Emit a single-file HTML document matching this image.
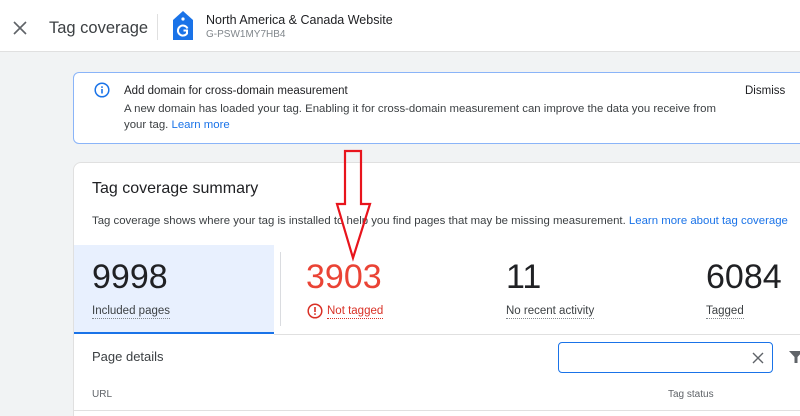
<!DOCTYPE html>
<html><head><meta charset="utf-8"><style>
*{margin:0;padding:0;box-sizing:border-box}
html,body{width:800px;height:416px;overflow:hidden}
body{background:#f1f3f4;font-family:"Liberation Sans",Arial,sans-serif;position:relative;color:#202124}
.a{position:absolute;white-space:nowrap}
</style></head><body>
<div class="a" style="left:0;top:0;width:800px;height:52px;background:#fff;border-bottom:1px solid #e0e0e0"></div>
<svg class="a" style="left:13px;top:21px" width="14" height="14" viewBox="0 0 14 14"><path d="M1 1L13 13M13 1L1 13" stroke="#5f6368" stroke-width="1.6"/></svg>
<div class="a" style="left:49px;top:19px;font-size:16.5px;color:#3c4043">Tag coverage</div>
<div class="a" style="left:157px;top:14px;width:1px;height:26px;background:#e0e0e0"></div>
<svg class="a" style="left:172px;top:11px" width="22" height="30" viewBox="0 0 22 30"><path d="M11 0L21 9V29H1V9Z" fill="#1a73e8"/><circle cx="11" cy="8" r="1.6" fill="#fff"/><path d="M15.5 17.5A5 5 0 1 0 15 22.5V19.5H11.5" fill="none" stroke="#fff" stroke-width="2"/></svg>
<div class="a" style="left:206px;top:13px;font-size:12.5px;color:#202124">North America &amp; Canada Website</div>
<div class="a" style="left:206px;top:29px;font-size:10px;color:#80868b">G-PSW1MY7HB4</div>

<div class="a" style="left:73px;top:72px;width:740px;height:72px;background:#fff;border:1px solid #8ab4f8;border-radius:6px"></div>
<svg class="a" style="left:94px;top:82px" width="16" height="16" viewBox="0 0 16 16"><circle cx="8" cy="8" r="6.8" fill="none" stroke="#1a73e8" stroke-width="1.5"/><rect x="7.2" y="7" width="1.6" height="4.5" fill="#1a73e8"/><rect x="7.2" y="4.3" width="1.6" height="1.6" fill="#1a73e8"/></svg>
<div class="a" style="left:124px;top:85px;font-size:11.5px;color:#202124">Add domain for cross-domain measurement</div>
<div class="a" style="left:124px;top:103px;font-size:11.4px;color:#3c4043">A new domain has loaded your tag. Enabling it for cross-domain measurement can improve the data you receive from</div>
<div class="a" style="left:124px;top:119px;font-size:11.4px;color:#3c4043">your tag. <span style="color:#1a73e8">Learn more</span></div>
<div class="a" style="left:745px;top:85px;font-size:11.5px;color:#202124">Dismiss</div>

<div class="a" style="left:73px;top:162px;width:740px;height:270px;background:#fff;border:1px solid #e0e0e0;border-radius:8px;overflow:hidden">
 <div class="a" style="left:0;top:82px;width:200px;height:89px;background:#e8f0fe;border-bottom:2px solid #1a73e8"></div>
</div>
<div class="a" style="left:92px;top:180px;font-size:16px;color:#202124">Tag coverage summary</div>
<div class="a" style="left:92px;top:215px;font-size:11.4px;color:#3c4043">Tag coverage shows where your tag is installed to help you find pages that may be missing measurement. <span style="color:#1a73e8">Learn more about tag coverage</span></div>
<div class="a" style="left:280px;top:252px;width:1px;height:74px;background:#dadce0"></div>
<div class="a" style="left:92px;top:258px;font-size:34px;color:#202124">9998</div>
<div class="a" style="left:92px;top:304px;font-size:11.5px;color:#3c4043;border-bottom:1px dotted #80868b;line-height:14px">Included pages</div>
<div class="a" style="left:306px;top:258px;font-size:34px;color:#ea4335">3903</div>
<svg class="a" style="left:307px;top:303px" width="16" height="16" viewBox="0 0 16 16"><circle cx="8" cy="8" r="6.8" fill="none" stroke="#d93025" stroke-width="1.5"/><rect x="7.2" y="4" width="1.6" height="5" fill="#d93025"/><rect x="7.2" y="10.3" width="1.6" height="1.6" fill="#d93025"/></svg>
<div class="a" style="left:327px;top:304px;font-size:11.5px;color:#d93025;border-bottom:1px dotted #d93025;line-height:14px">Not tagged</div>
<div class="a" style="left:506px;top:258px;font-size:34px;color:#202124">11</div>
<div class="a" style="left:506px;top:304px;font-size:11.5px;color:#3c4043;border-bottom:1px dotted #80868b;line-height:14px">No recent activity</div>
<div class="a" style="left:706px;top:258px;font-size:34px;color:#202124">6084</div>
<div class="a" style="left:706px;top:304px;font-size:11.5px;color:#3c4043;border-bottom:1px dotted #80868b;line-height:14px">Tagged</div>
<div class="a" style="left:274px;top:334px;width:540px;height:1px;background:#e0e0e0"></div>
<div class="a" style="left:92px;top:349px;font-size:13px;color:#3c4043">Page details</div>
<div class="a" style="left:558px;top:342px;width:215px;height:31px;border:1.5px solid #1a73e8;border-radius:4px;background:#fff"></div>
<svg class="a" style="left:752px;top:352px" width="12" height="12" viewBox="0 0 12 12"><path d="M1 1L11 11M11 1L1 11" stroke="#5f6368" stroke-width="1.4"/></svg>
<svg class="a" style="left:789px;top:351px" width="14" height="12" viewBox="0 0 14 12"><path d="M0 0H14L8.5 6V12H5.5V6Z" fill="#5f6368"/></svg>
<div class="a" style="left:92px;top:389px;font-size:10px;color:#5f6368">URL</div>
<div class="a" style="left:668px;top:389px;font-size:10px;color:#5f6368">Tag status</div>
<div class="a" style="left:74px;top:410px;width:740px;height:1px;background:#e0e0e0"></div>

<svg class="a" style="left:330px;top:145px" width="48" height="120" viewBox="0 0 48 120"><path d="M15 6H31V59H40L23 113L7 59H15Z" fill="none" stroke="#e8141c" stroke-width="2.2" stroke-linejoin="miter"/></svg>
</body></html>
